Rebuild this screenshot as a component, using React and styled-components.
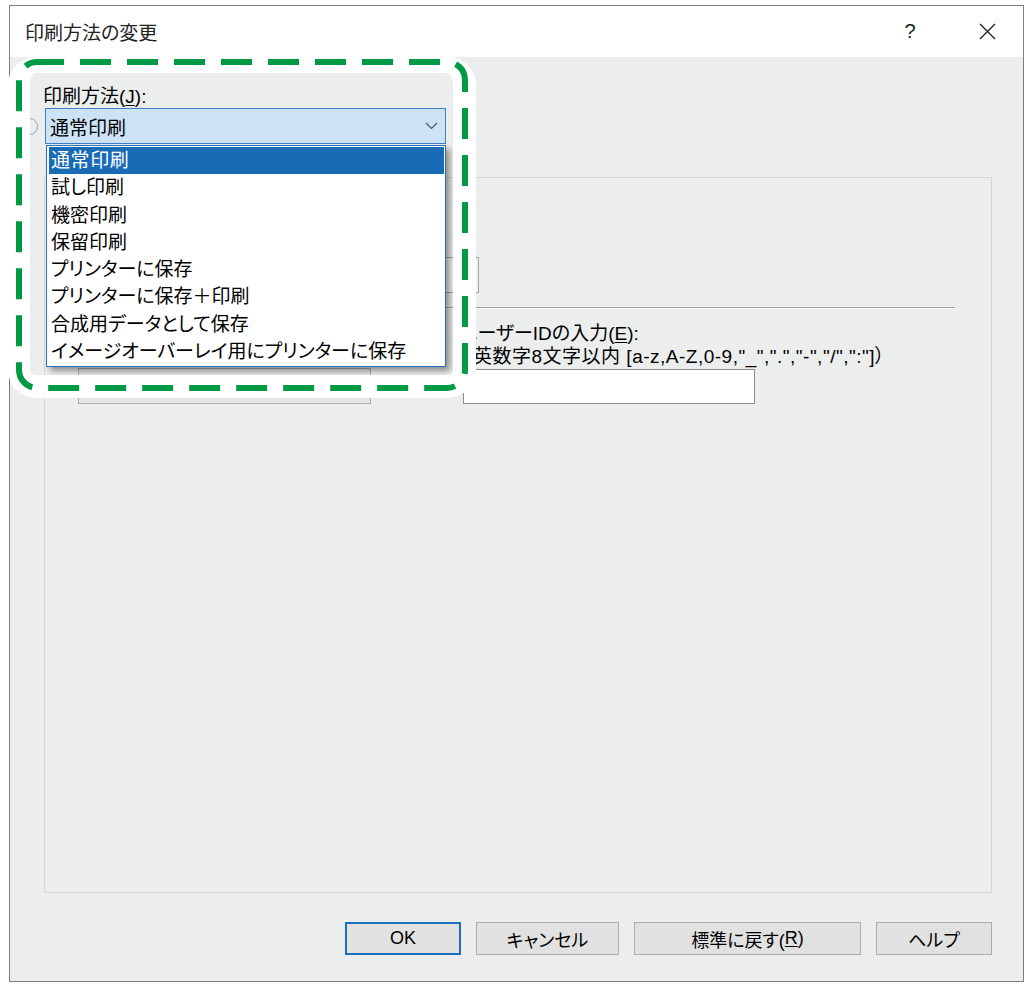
import React from "react";
import styled, { createGlobalStyle } from "styled-components";

const methods = [
  "通常印刷",
  "試し印刷",
  "機密印刷",
  "保留印刷",
  "プリンターに保存",
  "プリンターに保存＋印刷",
  "合成用データとして保存",
  "イメージオーバーレイ用にプリンターに保存",
];

function App() {
  return (
    <>
      <GlobalStyle />
      <Page>
        <Window>
          <TitleBar>
            <Title>印刷方法の変更</Title>
            <TitleButtons>
              <HelpMark>?</HelpMark>
              <svg width="17" height="17" viewBox="0 0 17 17">
                <path d="M1 1 L16 16 M16 1 L1 16" stroke="#222" strokeWidth="1.4" fill="none" />
              </svg>
            </TitleButtons>
          </TitleBar>

          <Body>
            <FieldLabel>
              印刷方法(<u>J</u>):
            </FieldLabel>
            <ComboRow>
              <Radio />
              <Combo>
                <span>通常印刷</span>
                <svg width="13" height="8" viewBox="0 0 13 8">
                  <path d="M1 1 L6.5 6.5 L12 1" stroke="#555" strokeWidth="1.2" fill="none" />
                </svg>
                <DropList>
                  {methods.map((m, i) => (
                    <Option key={m} $selected={i === 0}>
                      {m}
                    </Option>
                  ))}
                </DropList>
              </Combo>
            </ComboRow>

            <GroupBox>
              <WideField />
              <Separator />
              <Columns>
                <LeftCol>
                  <GrayBox />
                </LeftCol>
                <RightCol>
                  <Text $shift={-4}>
                    ユーザーIDの入力(<u>E</u>):
                  </Text>
                  <Text $spacing={0.5}>（英数字8文字以内 [a-z,A-Z,0-9,"_",".","-","/",":"]）</Text>
                  <TextInput />
                </RightCol>
              </Columns>
            </GroupBox>

            <ButtonRow>
              <Button $w={116} $primary>OK</Button>
              <Button $w={143}>キャンセル</Button>
              <Button $w={227}>
                標準に戻す(<u>R</u>)
              </Button>
              <Button $w={116}>ヘルプ</Button>
            </ButtonRow>
          </Body>

          <Callout>
            <Dashes width="468" height="341" viewBox="0 0 468 341">
              <rect
                x="11"
                y="5"
                width="446"
                height="326"
                rx="18"
                fill="none"
                stroke="#009a44"
                strokeWidth="6"
                strokeDasharray="31 16"
                strokeDashoffset="4"
              />
            </Dashes>
          </Callout>
        </Window>
      </Page>
    </>
  );
}

export default App;

const GlobalStyle = createGlobalStyle`
  html, body {
    margin: 0;
    padding: 0;
    background: #fff;
  }
  body {
    font-family: "Liberation Sans", "Noto Sans CJK JP", sans-serif;
    font-feature-settings: "palt";
    color: #000;
  }
  u {
    text-underline-offset: 2px;
  }
`;

const Page = styled.div`
  padding: 5px 0 0 9px;
`;

const Window = styled.div`
  position: relative;
  width: 1015px;
  height: 977px;
  box-sizing: border-box;
  border: 1px solid #7d7d7d;
  display: flex;
  flex-direction: column;
`;

const TitleBar = styled.div`
  height: 51px;
  background: #fff;
  display: flex;
  align-items: center;
  justify-content: space-between;
  padding: 0 27px 0 15px;
  flex-shrink: 0;
`;

const Title = styled.div`
  font-size: 19px;
  color: #222;
`;

const TitleButtons = styled.div`
  display: flex;
  align-items: center;
  gap: 57px;
`;

const HelpMark = styled.span`
  width: 24px;
  text-align: center;
  font-size: 20px;
  color: #222;
`;

const Body = styled.div`
  flex: 1;
  background: #eceeed;
  padding: 29px 31px 0 34px;
  display: flex;
  flex-direction: column;
`;

const FieldLabel = styled.div`
  font-size: 19px;
  line-height: 22px;
  margin-left: -1px;
`;

const ComboRow = styled.div`
  display: flex;
  align-items: center;
  gap: 7px;
  margin-left: -23px;
`;

const Radio = styled.div`
  width: 17px;
  height: 17px;
  box-sizing: border-box;
  border: 1.5px solid #8ea3cc;
  border-radius: 50%;
`;

const Combo = styled.div`
  position: relative;
  width: 401px;
  height: 36px;
  box-sizing: border-box;
  border: 1px solid #3f7fc8;
  background: #cce3f5;
  display: flex;
  align-items: center;
  justify-content: space-between;
  padding: 0 7px 0 4px;
  font-size: 19px;
`;

const DropList = styled.div`
  position: absolute;
  top: 36px;
  left: 0;
  width: 400px;
  box-sizing: border-box;
  border: 1px solid #2770bd;
  background: #fff;
  padding: 1px 1px 1px 2px;
  box-shadow: 4px 4px 6px rgba(0, 0, 0, 0.4);
  z-index: 2;
`;

const Option = styled.div`
  height: 27.3px;
  line-height: 27px;
  padding-left: 2px;
  font-size: 19px;
  letter-spacing: ${(p) => (p.$selected ? "0.6px" : "0")};
  white-space: nowrap;
  background: ${(p) => (p.$selected ? "#1a6bb5" : "transparent")};
  color: ${(p) => (p.$selected ? "#fff" : "#000")};
`;

const GroupBox = styled.div`
  margin-top: 33px;
  height: 716px;
  box-sizing: border-box;
  border: 1px solid #d6d6d6;
  padding: 79px 36px 0 33px;
`;

const WideField = styled.div`
  width: 401px;
  height: 36px;
  box-sizing: border-box;
  border: 1px solid #a6a6a6;
  background: #f2f2f2;
`;

const Separator = styled.div`
  margin-top: 14px;
  height: 1px;
  background: #a0a0a0;
  box-shadow: 0 1px 0 #fff;
`;

const Columns = styled.div`
  display: flex;
  margin-top: 14px;
`;

const LeftCol = styled.div`
  width: 293px;
  padding-top: 46px;
`;

const GrayBox = styled.div`
  height: 36px;
  box-sizing: border-box;
  border: 1px solid #adadad;
  background: #e5e5e5;
`;

const RightCol = styled.div`
  margin-left: 92px;
  display: flex;
  flex-direction: column;
`;

const Text = styled.div`
  font-size: 19px;
  line-height: 23px;
  white-space: nowrap;
  margin-left: ${(p) => p.$shift || 0}px;
  letter-spacing: ${(p) => p.$spacing || 0}px;
`;

const TextInput = styled.div`
  margin-top: 1px;
  width: 292px;
  height: 35px;
  box-sizing: border-box;
  border: 1px solid #8c8c8c;
  background: #fff;
`;

const ButtonRow = styled.div`
  margin-top: 29px;
  display: flex;
  justify-content: flex-end;
  gap: 15px;
`;

const Button = styled.div`
  width: ${(p) => p.$w}px;
  height: 33px;
  box-sizing: border-box;
  border: ${(p) => (p.$primary ? "2px solid #1a6fc0" : "1px solid #adadad")};
  background: #e1e1e1;
  display: flex;
  align-items: center;
  justify-content: center;
  font-size: 18px;
`;

const Callout = styled.div`
  position: absolute;
  left: -2px;
  top: 51px;
  width: 468px;
  height: 341px;
  box-sizing: border-box;
  border-style: solid;
  border-color: #fff;
  border-width: 16px 23px 23px 22px;
  border-radius: 28px;
  pointer-events: none;
  z-index: 5;
`;

const Dashes = styled.svg`
  position: absolute;
  left: -22px;
  top: -16px;
  overflow: visible;
`;
